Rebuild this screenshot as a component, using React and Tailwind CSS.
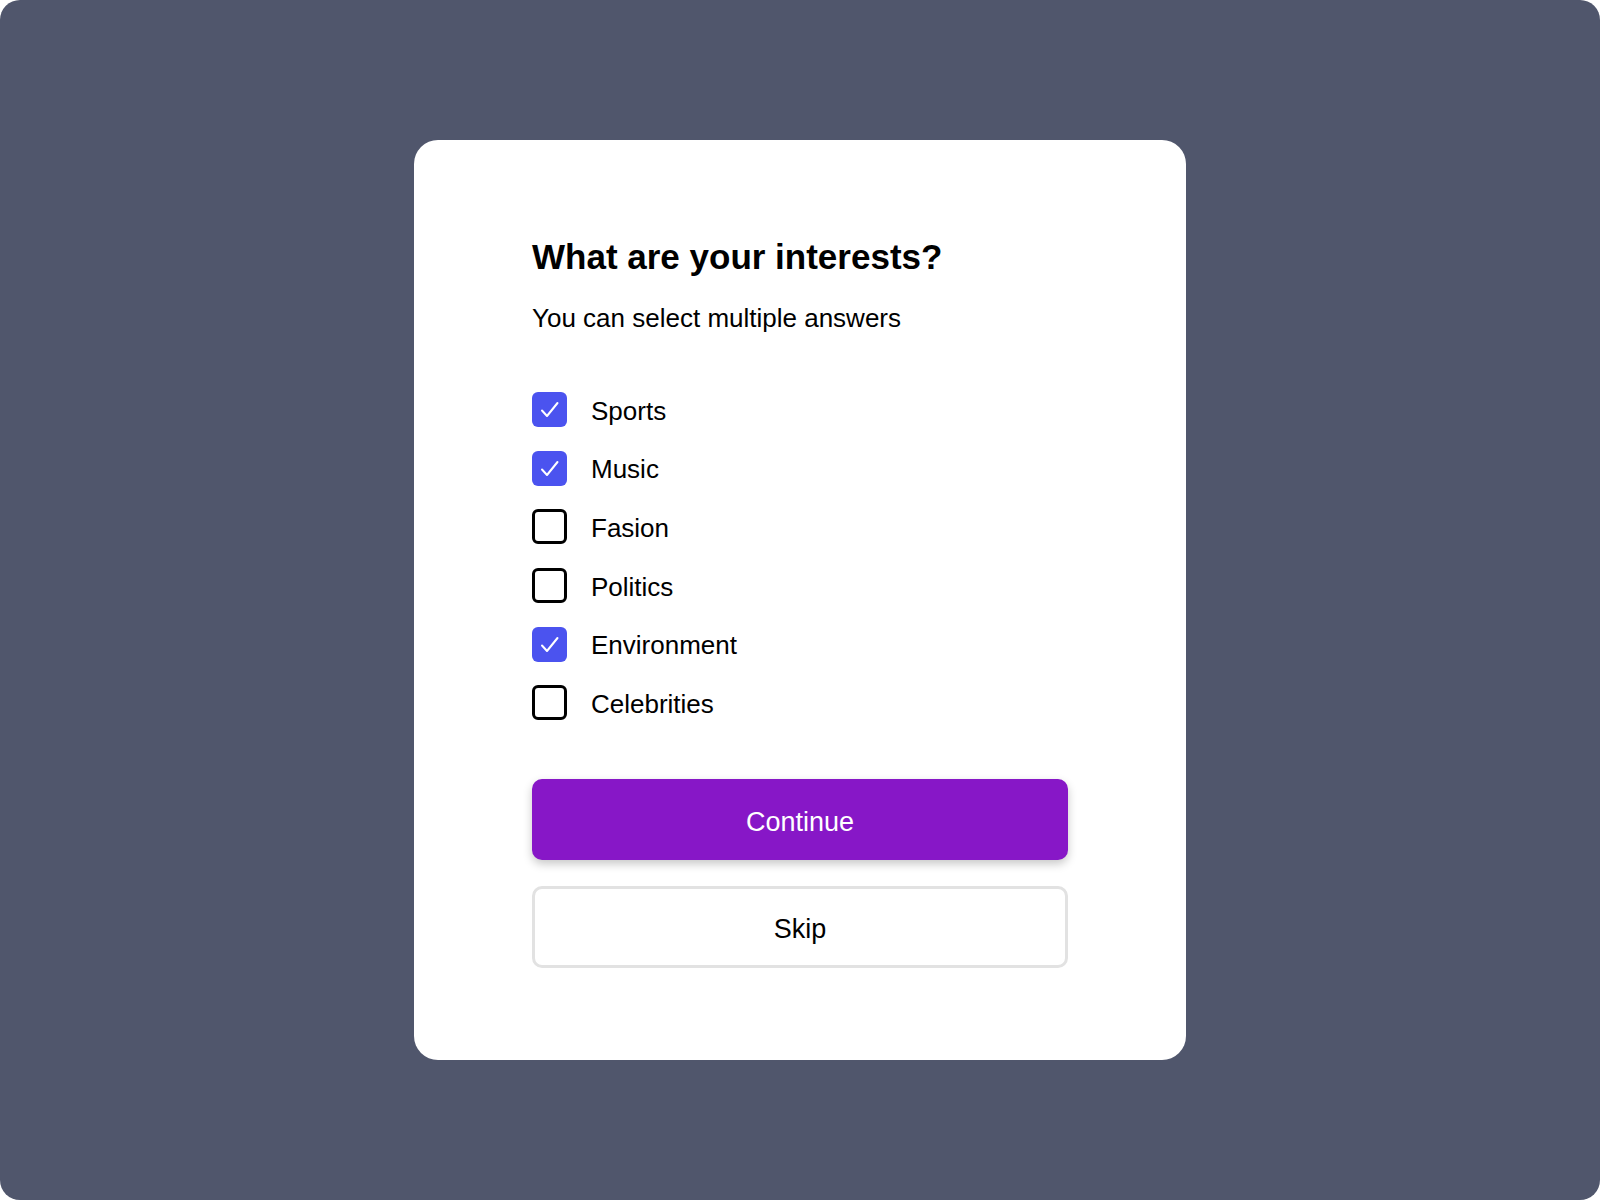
const interests = [
    { id: 1, label: 'Sports', checked: true },
    { id: 2, label: 'Music', checked: true },
    { id: 3, label: 'Fasion', checked: false },
    { id: 4, label: 'Politics', checked: false },
    { id: 5, label: 'Environment', checked: true },
    { id: 6, label: 'Celebrities', checked: false },
]

function Checkbox({ checked }) {
    if (checked) {
        return (
            <span className="flex h-[35px] w-[35px] items-center justify-center rounded-[6px] bg-[#4b53ef]">
                <svg width="35" height="35" viewBox="0 0 35 35" fill="none" stroke="white" strokeWidth="2" strokeLinecap="round" strokeLinejoin="round">
                    <path d="M10 18.5l5 5.5L25.5 11"></path>
                </svg>
            </span>
        )
    }
    return <span className="block h-[35px] w-[35px] rounded-[6px] border-[3px] border-black bg-white"></span>
}

export default function App() {
    return (
        <div className="h-[1200px] w-[1600px] bg-white" style={{ fontFamily: '"Liberation Sans", Arial, sans-serif' }}>
            <div className="flex h-full w-full items-center justify-center rounded-[20px] bg-[#50566c]">
                <div className="h-[920px] w-[772px] rounded-[24px] bg-white px-[118px] pt-[96px]">
                    <h1 className="text-[35px] font-bold leading-[42px] text-black">What are your interests?</h1>
                    <p className="mt-[25px] text-[26px] leading-[31px] text-black">You can select multiple answers</p>

                    <div className="mt-[58px] flex flex-col gap-[23.7px]">
                        {interests.map(item => (
                            <label key={item.id} className="flex h-[35px] items-center gap-[24px]">
                                <Checkbox checked={item.checked} />
                                <span className="pt-[3px] text-[26px] leading-[31px] text-black">{item.label}</span>
                            </label>
                        ))}
                    </div>

                    <div className="mt-[59px] flex flex-col gap-[26px]">
                        <button className="h-[81px] w-full rounded-[10px] bg-[#8717c7] pt-[4px] text-[27px] text-white shadow-[0_4px_10px_rgba(0,0,0,0.22)]">
                            Continue
                        </button>
                        <button className="h-[82px] w-full rounded-[10px] border-[3px] border-[#e2e2e2] bg-white pt-[4px] text-[27px] text-black">
                            Skip
                        </button>
                    </div>
                </div>
            </div>
        </div>
    )
}
